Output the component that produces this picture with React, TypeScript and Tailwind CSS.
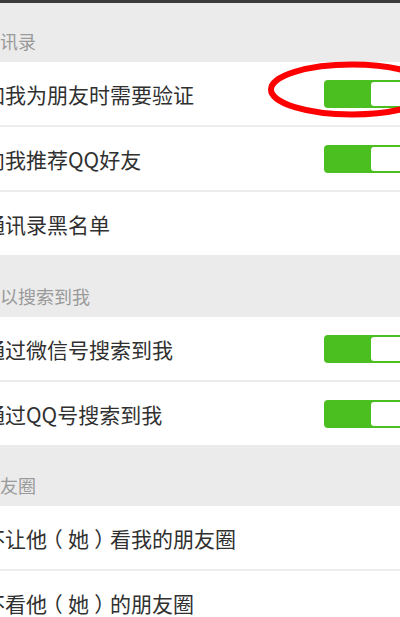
import React from 'react';

type Row = { label: string; toggle?: boolean };
type Group = { title: string; rows: Row[] };

const groups: Group[] = [
  {
    title: '通讯录',
    rows: [
      { label: '加我为朋友时需要验证', toggle: true },
      { label: '向我推荐QQ好友', toggle: true },
      { label: '通讯录黑名单' },
    ],
  },
  {
    title: '可以搜索到我',
    rows: [
      { label: '通过微信号搜索到我', toggle: true },
      { label: '通过QQ号搜索到我', toggle: true },
    ],
  },
  {
    title: '朋友圈',
    rows: [
      { label: '不让他（她）看我的朋友圈' },
      { label: '不看他（她）的朋友圈' },
    ],
  },
];

// full-width brackets sit centred in their cell on the device font
const Label: React.FC<{ text: string }> = ({ text }) => (
  <>
    {text.split(/([（）])/).map((part, i) =>
      part === '（' || part === '）' ? (
        <span
          key={i}
          className="inline-block w-[1em] text-center [font-feature-settings:'halt']"
        >
          {part}
        </span>
      ) : (
        <React.Fragment key={i}>{part}</React.Fragment>
      )
    )}
  </>
);

const Toggle: React.FC = () => (
  <div className="flex h-[28px] w-[98px] shrink-0 mr-[-22px] rounded-[4px] border-2 border-[#4cbf20] bg-[#4cbf20] overflow-hidden">
    <div className="w-[45px] shrink-0" />
    <div className="flex-1 bg-white rounded-l-[3px]" />
  </div>
);

const App: React.FC = () => {
  return (
    <div
      className="relative w-[400px] h-[617px] overflow-hidden bg-white"
      style={{ fontFamily: '"Noto Sans CJK SC", "Noto Sans", sans-serif' }}
    >
      <div className="h-[3px] bg-[#3b3b3b]" />
      {groups.map((g, gi) => (
        <div key={g.title}>
          {/* Section header */}
          <div
            className={`${gi === 0 ? 'h-[59px]' : gi === 1 ? 'h-[62px]' : 'h-[61px]'} bg-[#ebebeb] flex items-end pb-[10px]`}
          >
            <span className="-ml-[18px] text-[18px] leading-[22px] text-[#9a9a9a] whitespace-nowrap">
              {g.title}
            </span>
          </div>
          {/* Rows */}
          {g.rows.map((r, ri) => (
            <div key={r.label}>
              {ri > 0 && <div className="h-[2px] bg-[#ececec]" />}
              <div className="h-[63px] flex items-center justify-between">
                <span className="-ml-[16px] text-[21px] leading-[26px] text-[#303030] whitespace-nowrap">
                  <Label text={r.label} />
                </span>
                {r.toggle && <Toggle />}
              </div>
            </div>
          ))}
        </div>
      ))}

      {/* Red annotation ring */}
      <svg
        className="absolute left-0 top-0 pointer-events-none"
        width="400"
        height="617"
        viewBox="0 0 400 617"
      >
        <ellipse
          cx="352"
          cy="89.5"
          rx="81"
          ry="25"
          fill="none"
          stroke="#ff0000"
          strokeWidth="6"
        />
      </svg>
    </div>
  );
};

export default App;
